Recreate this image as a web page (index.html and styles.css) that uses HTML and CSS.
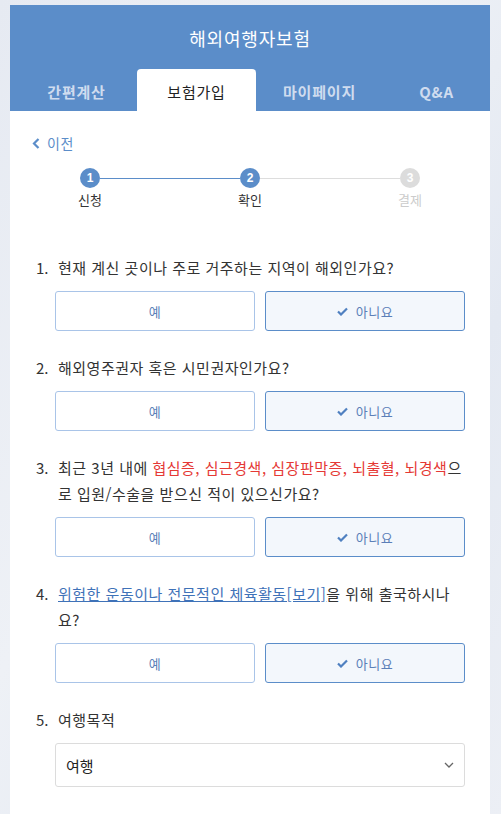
FILE: index.html
```html
<!DOCTYPE html>
<html lang="ko">
<head>
<meta charset="utf-8">
<title>해외여행자보험</title>
<link rel="stylesheet" href="styles.css">
</head>
<body>
<div class="app">
  <header class="header">
    <h1 class="title">해외여행자보험</h1>
    <nav class="tabs">
      <a class="tab tab-first">간편계산</a>
      <a class="tab tab-active">보험가입</a>
      <a class="tab">마이페이지</a>
      <a class="tab">Q&amp;A</a>
    </nav>
  </header>
  <main class="content">
    <a class="back">
      <svg class="back-icon" width="8" height="11" viewBox="0 0 8 11"><polyline points="6.5,1 2,5.5 6.5,10" fill="none" stroke="#5b8dc9" stroke-width="2.2"/></svg>
      <span>이전</span>
    </a>
    <div class="stepper">
      <div class="step done"><span class="dot">1</span><span class="step-label">신청</span></div>
      <div class="line line-done"></div>
      <div class="step done"><span class="dot">2</span><span class="step-label">확인</span></div>
      <div class="line"></div>
      <div class="step todo"><span class="dot">3</span><span class="step-label">결제</span></div>
    </div>

    <section class="q">
      <p class="q-text"><span class="q-num">1.</span><span class="q-body">현재 계신 곳이나 주로 거주하는 지역이 해외인가요?</span></p>
      <div class="choices">
        <button class="choice">예</button>
        <button class="choice selected"><svg class="check" width="11" height="9" viewBox="0 0 11 9"><polyline points="1,4.5 4,7.5 10,1.5" fill="none" stroke="#4f80c0" stroke-width="2.2"/></svg>아니요</button>
      </div>
    </section>

    <section class="q">
      <p class="q-text"><span class="q-num">2.</span><span class="q-body">해외영주권자 혹은 시민권자인가요?</span></p>
      <div class="choices">
        <button class="choice">예</button>
        <button class="choice selected"><svg class="check" width="11" height="9" viewBox="0 0 11 9"><polyline points="1,4.5 4,7.5 10,1.5" fill="none" stroke="#4f80c0" stroke-width="2.2"/></svg>아니요</button>
      </div>
    </section>

    <section class="q">
      <p class="q-text"><span class="q-num">3.</span><span class="q-body">최근 3년 내에 <span class="red">협심증, 심근경색, 심장판막증, 뇌출혈, 뇌경색</span>으로 입원/수술을 받으신 적이 있으신가요?</span></p>
      <div class="choices">
        <button class="choice">예</button>
        <button class="choice selected"><svg class="check" width="11" height="9" viewBox="0 0 11 9"><polyline points="1,4.5 4,7.5 10,1.5" fill="none" stroke="#4f80c0" stroke-width="2.2"/></svg>아니요</button>
      </div>
    </section>

    <section class="q">
      <p class="q-text"><span class="q-num">4.</span><span class="q-body"><a class="link">위험한 운동이나 전문적인 체육활동[보기]</a>을 위해 출국하시나요?</span></p>
      <div class="choices">
        <button class="choice">예</button>
        <button class="choice selected"><svg class="check" width="11" height="9" viewBox="0 0 11 9"><polyline points="1,4.5 4,7.5 10,1.5" fill="none" stroke="#4f80c0" stroke-width="2.2"/></svg>아니요</button>
      </div>
    </section>

    <section class="q">
      <p class="q-text"><span class="q-num">5.</span><span class="q-body">여행목적</span></p>
      <div class="select">
        <span class="select-value">여행</span>
        <svg class="select-icon" width="10" height="6" viewBox="0 0 10 6"><polyline points="1,1 5,5 9,1" fill="none" stroke="#666" stroke-width="1.3"/></svg>
      </div>
    </section>
  </main>
</div>
</body>
</html>
```

FILE: styles.css
```css
* { box-sizing: border-box; }
html, body { margin: 0; padding: 0; }
body {
  font-family: "Noto Sans CJK KR", "Noto Sans", sans-serif;
  background: linear-gradient(120deg, #e6eaf2 0%, #eef1f6 40%, #e4e9f2 70%, #eceff5 100%);
  min-height: 814px;
  padding: 5px 0 0 10px;
  overflow: hidden;
}
.app {
  width: 480px;
  min-height: 809px;
  background: #fff;
}
.header { background: #5b8dc9; }
.title {
  margin: 0;
  height: 64px;
  padding-top: 20px;
  text-align: center;
  color: #fff;
  font-size: 18px;
  letter-spacing: 0.8px;
  line-height: 26px;
  font-weight: 400;
}
.tabs {
  display: grid;
  grid-template-columns: 127px 119px 127px 107px;
  height: 42px;
}
.tab {
  display: flex;
  align-items: center;
  justify-content: center;
  color: #cfdcef;
  font-size: 15px;
  letter-spacing: 0.8px;
  font-weight: 700;
  padding-top: 2px;
}
.tab-first { padding-left: 6px; }
.tab-active {
  background: #fff;
  color: #222;
  font-weight: 400;
  border-radius: 4px 4px 0 0;
}
.content { padding: 0 25px 30px 26px; }
.back {
  display: flex;
  align-items: center;
  gap: 7px;
  height: 20px;
  margin-top: 22px;
  margin-left: -4px;
  color: #5b8dc9;
  font-size: 14px;
  letter-spacing: 0.5px;
}
.back-icon { display: block; }
.stepper {
  display: flex;
  align-items: flex-start;
  margin: 15px 0 0 44px;
  width: 340px;
}
.step {
  width: 40px;
  display: flex;
  flex-direction: column;
  align-items: center;
  margin: 0 -10px;
  position: relative;
  z-index: 1;
}
.dot {
  width: 20px;
  height: 20px;
  border-radius: 50%;
  background: #5b8dc9;
  color: #fff;
  font-family: "Liberation Sans", Arial, sans-serif;
  font-size: 12px;
  font-weight: 700;
  line-height: 20px;
  text-align: center;
}
.todo .dot { background: #dcdcdc; }
.step-label {
  margin-top: 3px;
  font-size: 13px;
  line-height: 18px;
  color: #333;
}
.todo .step-label { color: #ccc; }
.line {
  flex: 1;
  height: 1px;
  margin-top: 9.5px;
  background: #dddddd;
}
.line-done { background: #5b8dc9; }
.q { margin-top: 24px; }
.stepper + .q { margin-top: 46px; }
.q-text {
  margin: 0;
  display: flex;
  font-size: 15px;
  letter-spacing: 0.5px;
  line-height: 26px;
  color: #333;
  word-break: break-all;
}
.q-num { width: 22px; flex: none; letter-spacing: 0; }
.q-body { flex: 1; }
.red { color: #e53935; }
.link { color: #3f72b8; text-decoration: underline; }
.choices {
  display: grid;
  grid-template-columns: 200px 200px;
  gap: 10px;
  margin: 10px 0 0 19px;
}
.choice {
  height: 40px;
  display: flex;
  align-items: center;
  justify-content: center;
  gap: 8px;
  border: 1px solid #a9c4e8;
  border-radius: 3px;
  background: #fff;
  color: #5b7fb8;
  font-family: "Noto Sans CJK KR", sans-serif;
  font-size: 13px;
  letter-spacing: 0.5px;
  padding: 0;
}
.choice.selected {
  border-color: #5b8dc9;
  background: #f3f7fc;
}
.check { display: block; }
.select {
  margin: 10px 0 0 19px;
  width: 410px;
  height: 44px;
  border: 1px solid #dcdcdc;
  border-radius: 3px;
  display: flex;
  align-items: center;
  justify-content: space-between;
  padding: 0 10px 0 10px;
  font-size: 15px;
  color: #222;
}
.select-icon { display: block; }
```
